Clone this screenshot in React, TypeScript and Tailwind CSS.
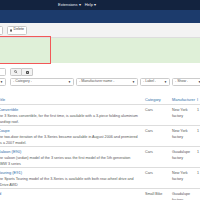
import React from "react"

type Row = {
  title: string
  lines: string[]
  category: string
  maker: string[]
  extra: string
}

const rows: Row[] = [
  {
    title: "Convertible",
    lines: ["the 3 Series convertible, for the first time, is available with a 3-piece folding aluminium", "hardtop roof."],
    category: "Cars",
    maker: ["New York", "factory"],
    extra: "1",
  },
  {
    title: "Coupe",
    lines: ["the two-door iteration of the 3-Series became available in August 2006 and premiered", "as a 2007 model."],
    category: "Cars",
    maker: ["New York", "factory"],
    extra: "1",
  },
  {
    title: "Saloon (E90)",
    lines: ["the saloon (sedan) model of the 3 series was the first model of the 5th generation", "BMW 3 series"],
    category: "Cars",
    maker: ["Guadalupe", "factory"],
    extra: "1",
  },
  {
    title: "Touring (E91)",
    lines: ["the Sports Touring model of the 3-Series is available with both rear-wheel drive and", "xDrive AWD"],
    category: "Cars",
    maker: ["New York", "factory"],
    extra: "1",
  },
  {
    title: "ld",
    lines: [],
    category: "Small Bike",
    maker: ["Guadalupe", "factory"],
    extra: "",
  },
]

function BoxX({ className }: { className?: string }) {
  return (
    <svg viewBox="0 0 10 10" className={className}>
      <rect x="0.5" y="0.5" width="9" height="9" fill="#333" />
      <path d="M3 3 L7 7 M7 3 L3 7" stroke="#fff" strokeWidth="1.4" />
    </svg>
  )
}

function Select({ label, width }: { label: string; width: string }) {
  return (
    <div className={`${width} flex h-[8px] shrink-0 items-center justify-between rounded-[1.5px] border border-[#cccccc] bg-white px-[2px] text-[3.6px] text-[#555]`}>
      <span className="truncate">{label}</span>
      <span className="text-[3px] text-[#222]">▼</span>
    </div>
  )
}

export default function App() {
  return (
    <div className="h-[200px] w-[200px] overflow-hidden bg-white font-['Liberation_Sans',Arial,sans-serif]">
      <nav className="flex h-[10px] items-center gap-[4px] bg-[#13233f] pl-[58px] text-[4px] text-[#e8ecf2]">
        <span>Extensions ▾</span>
        <span>Help ▾</span>
      </nav>
      <header className="h-[13px] bg-[#1c3b6c]" />

      <div className="flex h-[15px] items-center gap-[4px] border-b border-[#dddddd] bg-[#f3f3f3] -ml-[3px]">
        <div className="h-[9px] w-[6px] rounded-[1.5px] border border-[#c8c8c8] bg-white" />
        <div className="flex h-[9px] w-[20px] items-center gap-[1.5px] rounded-[1.5px] border border-[#c8c8c8] bg-white px-[2px] text-[3.6px] text-[#333]">
          <BoxX className="h-[3px] w-[3px]" />
          <span>Delete</span>
        </div>
      </div>

      <div className="relative h-[25px] bg-[#dff0d8]">
        <div className="absolute -left-[4px] -top-[2px] h-[28px] w-[55px] border-[1.5px] border-[#f25858]" />
      </div>

      <div className="mt-[5px] flex h-[8px] items-stretch -ml-[3px]">
        <div className="w-[9px] rounded-[1.5px] border border-[#cccccc] bg-white" />
        <div className="ml-[4px] flex w-[12px] items-center justify-center rounded-l-[1.5px] border border-[#c8c8c8] bg-[#f3f3f3]">
          <svg viewBox="0 0 10 10" className="h-[3.5px] w-[3.5px]">
            <circle cx="4" cy="4" r="2.8" fill="none" stroke="#333" strokeWidth="1.4" />
            <path d="M6 6 L9 9" stroke="#333" strokeWidth="1.6" />
          </svg>
        </div>
        <div className="flex w-[11px] items-center justify-center rounded-r-[1.5px] border border-l-0 border-[#c8c8c8] bg-[#f3f3f3]">
          <BoxX className="h-[3px] w-[3px]" />
        </div>
      </div>

      <div className="mt-[2px] flex gap-[2px] -ml-[3px]">
        <Select label="" width="w-[9px]" />
        <Select label="- Category -" width="w-[64px] ml-[2px]" />
        <Select label="- Manufacturer name -" width="w-[62px]" />
        <Select label="- Label -" width="w-[30px]" />
        <Select label="- Show -" width="w-[32px]" />
      </div>

      <div className="mt-[10px] -ml-[2px] grid h-[9px] grid-cols-[147px_27px_25px_1fr] items-center border-b border-[#dddddd] text-[3.9px] text-[#2f6ea8]">
        <span>Title</span>
        <span>Category</span>
        <span className="whitespace-nowrap">Manufacturer</span>
        <span>I</span>
      </div>

      {rows.map((row) => (
        <div key={row.title} className="-ml-[2px] grid h-[21px] grid-cols-[147px_27px_25px_1fr] border-b border-[#dddddd] pt-[2px] text-[3.7px] leading-[6px] text-[#555]">
          <div className="whitespace-nowrap">
            <p className="text-[4px] text-[#2f6ea8]">{row.title}</p>
            {row.lines.map((line) => (
              <p key={line}>{line}</p>
            ))}
          </div>
          <div className="whitespace-nowrap">{row.category}</div>
          <div>
            {row.maker.map((m) => (
              <p key={m}>{m}</p>
            ))}
          </div>
          <div>{row.extra}</div>
        </div>
      ))}
    </div>
  )
}
